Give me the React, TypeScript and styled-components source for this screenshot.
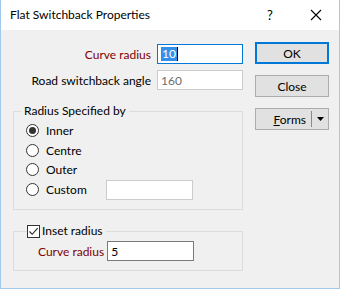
import React from "react";
import styled, { createGlobalStyle } from "styled-components";

const GlobalStyle = createGlobalStyle`
  html, body {
    margin: 0;
    padding: 0;
    background: #ffffff;
  }
  body {
    font-family: Lato, "Noto Sans", sans-serif;
    font-size: 12px;
    color: #000000;
  }
`;

const RADIUS_OPTIONS = ["Inner", "Centre", "Outer", "Custom"];

const FlatSwitchbackDialog = () => {
  return (
    <>
      <GlobalStyle />
      <DialogWindow>
        <TitleBar>
          <TitleText>Flat Switchback Properties</TitleText>
          <TitleButton>?</TitleButton>
          <TitleButton>
            <svg width="12" height="12" viewBox="0 0 12 12">
              <path d="M1 1 L11 11 M11 1 L1 11" stroke="#000" strokeWidth="1.1" />
            </svg>
          </TitleButton>
        </TitleBar>

        <DialogBody>
          <MainColumn>
            <FieldsGrid>
              <FieldLabel $required>Curve radius</FieldLabel>
              <TextBox $focused>
                <SelectedText>10</SelectedText>
                <Caret />
              </TextBox>
              <FieldLabel>Road switchback angle</FieldLabel>
              <TextBox $disabled>
                <DisabledValue>160</DisabledValue>
              </TextBox>
            </FieldsGrid>

            <GroupBox>
              <GroupLegend>Radius Specified by</GroupLegend>
              <RadioList>
                {RADIUS_OPTIONS.map((option) => (
                  <RadioRow key={option}>
                    <RadioCircle $checked={option === "Inner"} />
                    <RadioLabel>{option}</RadioLabel>
                    {option === "Custom" && <TextBox $disabled $small />}
                  </RadioRow>
                ))}
              </RadioList>
            </GroupBox>

            <GroupBox $inset>
              <CheckLegend>
                <CheckBox>
                  <svg width="11" height="11" viewBox="0 0 11 11">
                    <path d="M1.5 5.5 L4.2 8.3 L9.6 2.2" stroke="#222" strokeWidth="1.1" fill="none" />
                  </svg>
                </CheckBox>
                Inset radius
              </CheckLegend>
              <InsetRow>
                <FieldLabel $required>Curve radius</FieldLabel>
                <TextBox $small>5</TextBox>
              </InsetRow>
            </GroupBox>
          </MainColumn>

          <ButtonColumn>
            <DialogButton $default>OK</DialogButton>
            <DialogButton>Close</DialogButton>
            <DialogButton $split>
              <SplitMain>
                <u>F</u>orms
              </SplitMain>
              <SplitDivider />
              <SplitArrow>
                <svg width="7" height="4" viewBox="0 0 7 4">
                  <path d="M0 0 L7 0 L3.5 4 Z" fill="#000" />
                </svg>
              </SplitArrow>
            </DialogButton>
          </ButtonColumn>
        </DialogBody>
      </DialogWindow>
    </>
  );
};

const DialogWindow = styled.div`
  width: 340px;
  height: 289px;
  box-sizing: border-box;
  border: 1px solid #a3c9ee;
  border-top: none;
  background: #f0f0f0;
  display: flex;
  flex-direction: column;
`;

const TitleBar = styled.div`
  height: 30px;
  background: #ffffff;
  display: flex;
  align-items: center;
  padding-left: 9px;
  flex-shrink: 0;
`;

const TitleText = styled.div`
  flex: 1;
  font-size: 12px;
  margin-top: -1px;
`;

const TitleButton = styled.div`
  width: 46px;
  height: 30px;
  display: flex;
  align-items: center;
  justify-content: center;
  font-size: 13px;
`;

const DialogBody = styled.div`
  display: flex;
  padding: 12px 0 0 12px;
  gap: 12px;
`;

const MainColumn = styled.div`
  width: 230px;
  display: flex;
  flex-direction: column;
  padding-top: 2px;
`;

const FieldsGrid = styled.div`
  display: grid;
  grid-template-columns: 138px 86px;
  column-gap: 6px;
  row-gap: 6px;
  align-items: center;
`;

const FieldLabel = styled.div<{ $required?: boolean }>`
  text-align: right;
  color: ${(p) => (p.$required ? "#800000" : "#000000")};
  white-space: nowrap;
`;

const TextBox = styled.div<{ $focused?: boolean; $disabled?: boolean; $small?: boolean }>`
  box-sizing: border-box;
  height: 20px;
  width: ${(p) => (p.$small ? "87px" : "86px")};
  background: #ffffff;
  border: 1px solid
    ${(p) => (p.$focused ? "#0078d7" : p.$disabled ? "#cccccc" : "#7a7a7a")};
  display: flex;
  align-items: center;
  padding-left: 3px;
`;

const SelectedText = styled.span`
  background: #3390ea;
  color: #ffffff;
  line-height: 14px;
  padding: 0 1px;
`;

const Caret = styled.span`
  width: 1px;
  height: 14px;
  background: #000;
`;

const DisabledValue = styled.span`
  color: #6d6d6d;
`;

const GroupBox = styled.fieldset<{ $inset?: boolean }>`
  margin: 13px 0 0 0;
  padding: ${(p) => (p.$inset ? "2px 0 9px 24px" : "0 0 10px 12px")};
  border: 1px solid #dcdcdc;
  min-width: 0;
`;

const GroupLegend = styled.legend`
  padding: 0 3px;
  margin-left: -5px;
  line-height: 16px;
`;

const RadioList = styled.div`
  display: flex;
  flex-direction: column;
  padding-top: 2px;
`;

const RadioRow = styled.div`
  height: 19.6px;
  display: flex;
  align-items: center;
`;

const RadioCircle = styled.span<{ $checked?: boolean }>`
  box-sizing: border-box;
  width: 13px;
  height: 13px;
  border-radius: 50%;
  border: 1px solid #333333;
  background: #ffffff;
  display: flex;
  align-items: center;
  justify-content: center;
  margin-right: 7px;

  &::after {
    content: "";
    display: ${(p) => (p.$checked ? "block" : "none")};
    width: 7px;
    height: 7px;
    border-radius: 50%;
    background: #333333;
  }
`;

const RadioLabel = styled.span`
  width: 60px;
`;

const CheckLegend = styled.legend`
  display: flex;
  align-items: center;
  padding: 0 3px 0 0;
  margin-left: -11px;
  line-height: 16px;
`;

const CheckBox = styled.span`
  box-sizing: border-box;
  width: 13px;
  height: 13px;
  border: 1px solid #333333;
  background: #ffffff;
  display: flex;
  align-items: center;
  justify-content: center;
  margin-right: 2px;
`;

const InsetRow = styled.div`
  display: flex;
  align-items: center;
  gap: 3px;
`;

const ButtonColumn = styled.div`
  display: flex;
  flex-direction: column;
  gap: 11px;
`;

const DialogButton = styled.div<{ $default?: boolean; $split?: boolean }>`
  box-sizing: border-box;
  width: 74px;
  height: 22px;
  background: #e1e1e1;
  border: ${(p) => (p.$default ? "2px solid #0078d7" : "1px solid #adadad")};
  display: flex;
  align-items: center;
  justify-content: ${(p) => (p.$split ? "flex-end" : "center")};
`;

const SplitMain = styled.span`
  padding-right: 5px;
`;

const SplitDivider = styled.span`
  width: 1px;
  height: 16px;
  background: #8a8a8a;
`;

const SplitArrow = styled.span`
  width: 16px;
  display: flex;
  align-items: center;
  justify-content: center;
`;

export default FlatSwitchbackDialog;
